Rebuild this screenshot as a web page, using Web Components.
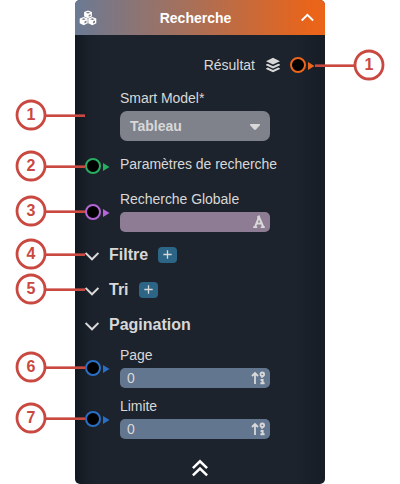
<!DOCTYPE html>
<html lang="fr"><head><meta charset="utf-8"><title>Recherche</title>
<style>
html,body{margin:0;background:#fff}
body{width:400px;height:484px;position:relative;overflow:hidden;font:14px/16px "Liberation Sans",Arial,sans-serif}
</style></head><body>
<node-panel heading="Recherche">
  <output-row label="Résultat"></output-row>
  <node-field label="Smart Model*" style="margin-top:10px"><select-box>Tableau</select-box></node-field>
  <node-field label="Paramètres de recherche" port="#27ae60" style="margin-top:13px;height:20px"></node-field>
  <node-field label="Recherche Globale" port="#b565d8" style="margin-top:17px"><input-box kind="text"></input-box></node-field>
  <section-row label="Filtre" add style="margin-top:5px"></section-row>
  <section-row label="Tri" add></section-row>
  <section-row label="Pagination"></section-row>
  <node-field label="Page" port="#2a6fc4" style="margin-top:5px"><input-box kind="number">0</input-box></node-field>
  <node-field label="Limite" port="#2a6fc4" style="margin-top:10px"><input-box kind="number">0</input-box></node-field>
  <panel-footer></panel-footer>
</node-panel>
<call-out style="left:15px;top:99px">1</call-out>
<call-out style="left:15px;top:150px">2</call-out>
<call-out style="left:15px;top:195px">3</call-out>
<call-out style="left:15px;top:238px">4</call-out>
<call-out style="left:15px;top:273px">5</call-out>
<call-out style="left:15px;top:351px">6</call-out>
<call-out style="left:15px;top:402px">7</call-out>
<call-out reverse style="left:316px;top:49px">1</call-out>
<script>
const define = (name, render) => customElements.define(name, class extends HTMLElement {
  connectedCallback() {
    if (!this.shadowRoot) this.attachShadow({mode: 'open'}).innerHTML = render(this);
  }
});

define('node-panel', el => `<style>
:host{display:block;box-sizing:border-box;width:250px;height:484px;margin-left:75px;border-radius:5px;overflow:hidden;color:#d8d8d8;
background:linear-gradient(90deg,#121820 0,#1a212a 14px,#1c232c 26px,#1c232c 222px,#171c25 100%)}
header{box-sizing:border-box;height:35px;display:grid;grid-template-columns:20px 1fr 20px;align-items:center;padding:0 7px 0 4px;
background:linear-gradient(90deg,#6b7a94 0,#ea6419 95%);color:#fff;font-weight:bold}
b{text-align:center;padding-right:6px}
svg{display:block}
</style><header>
<svg width="18" height="16" viewBox="0 0 18 16"><g fill="#fff"><path d="M9 .4l3.900 1.700v4.500L9 8.300 5.100 6.600V2.100z"/><path d="M4.700 6.900l4 1.700v4.700l-4 2-4-2V8.600z"/><path d="M13.300 6.900l4 1.700v4.700l-4 2-4-2V8.600z"/></g><g fill="#817b86"><path d="M6.700 2.700L9 1.800l2.300.9L9 3.600z"/><path d="M9.700 5l2-.8v1.600l-2 .9z"/><path d="M2.500 9.200l2.200-.9 2.200.9-2.200.9z"/><path d="M5.500 11.500l2-.9v1.900l-2 1z"/><path d="M11.100 9.200l2.200-.9 2.200.9-2.200.9z"/><path d="M14 11.500l2-.9v1.900l-2 1z"/></g></svg>
<b>${el.getAttribute('heading')}</b>
<svg width="16" height="12" viewBox="0 0 16 12"><path d="M3.700 8.500l5.700-5.600 5.700 5.600" fill="none" stroke="#fff" stroke-width="1.900"/></svg>
</header><slot></slot>`);

define('node-port', el => `<style>
:host{display:flex;align-items:center;width:25px;height:16px;gap:2px}
i{box-sizing:border-box;flex:none;width:16px;height:16px;border:2px solid ${el.getAttribute('color')};border-radius:50%;background:#000}
svg{flex:none;margin-top:1px}
</style><i></i><svg width="7" height="8" viewBox="0 0 7 8"><path d="M0 0l6.500 4L0 8z" fill="${el.getAttribute('color')}"/></svg>`);

define('output-row', el => `<style>
:host{display:flex;align-items:center;justify-content:flex-end;height:30px;margin-top:15px;padding-right:10px}
svg{margin:0 9px 0 10px}
</style><span>${el.getAttribute('label')}</span>
<svg width="16" height="16" viewBox="0 0 16 16" fill="#d8d8d8"><path d="M8 .8l7 3.400-7 3.400-7-3.400z"/><path d="M2.700 6.700L8 9.200l5.300-2.500L15 7.600v.6l-7 3.300-7-3.300v-.6z"/><path d="M2.700 10.500L8 13l5.300-2.500 1.700.9v.6l-7 3.300L1 12v-.6z"/></svg>
<node-port color="#ea661c"></node-port>`);

define('node-field', el => {
  const port = el.getAttribute('port');
  return `<style>
:host{display:grid;grid-template-columns:35px 1fr;align-items:center;margin-left:10px}
.body{grid-column:2}
.label{height:16px;line-height:16px;white-space:nowrap;letter-spacing:-.04px}
::slotted(*){margin-top:5px}
node-port{position:relative;top:${el.children.length ? '.5px' : '2px'}}
</style>${port ? `<node-port color="${port}"></node-port>` : ''}
<div class="body"><div class="label">${el.getAttribute('label')}</div><slot></slot></div>`;
});

define('select-box', () => `<style>
:host{box-sizing:border-box;display:flex;align-items:center;justify-content:space-between;width:150px;height:30px;padding:0 10px;border-radius:7px;background:#7f828b;font-weight:bold}
svg{flex:none;margin-top:2px}
</style><slot></slot><svg width="10" height="6" viewBox="0 0 10 6"><path d="M.8 0h8.400q1.200.2.600 1.200L6 5.500q-1 .9-2 0L.2 1.200Q-.4.200.8 0z" fill="#d8d8d8"/></svg>`);

define('input-box', el => {
  const text = el.getAttribute('kind') === 'text';
  return `<style>
:host{box-sizing:border-box;display:flex;align-items:center;justify-content:space-between;width:150px;height:20px;padding:0 ${text ? 4 : 5}px 0 7px;border-radius:5px;background:${text ? '#8d7c93' : '#63768f'}}
svg{fill:none;stroke:#d8d8d8;stroke-width:1.800}
</style><span><slot></slot></span>` + (text
  ? `<svg width="14" height="14" viewBox="0 0 14 14"><path d="M3 12L7 2l4.300 10M4.500 8.500h5.200" stroke-width="2"/><path d="M1.200 12.200h4M8.800 12.200h4M5 2h2.500" stroke-width="1.700"/></svg>`
  : `<svg width="14" height="14" viewBox="0 0 14 14"><path d="M4 13V2M1 5l3-3 3 3"/><circle cx="11.300" cy="3.300" r="1.800"/><path d="M12.900 4L10.500 6.700" stroke-width="1.500"/><path d="M9.600 8.900h2v3.500M9.400 12.300h4.200" stroke-width="2"/></svg>`);
});

define('section-row', el => `<style>
:host{display:flex;align-items:center;height:35px;margin-left:10px;font-size:16px;line-height:18px;font-weight:bold}
.chev{margin:3px 10px 0 0}
.add{display:grid;place-items:center;width:19px;height:16px;margin-left:10px;border-radius:4px;background:#2d6587}
.add svg{display:block}
</style><svg class="chev" width="14" height="9" viewBox="0 0 14 9"><path d="M.6 1L7 7.300 13.400 1" fill="none" stroke="#d8d8d8" stroke-width="1.900"/></svg>
<span>${el.getAttribute('label')}</span>${el.hasAttribute('add') ? `<span class="add"><svg width="9" height="9" viewBox="0 0 9 9"><path d="M4.500 .3v8.400M.3 4.500h8.400" stroke="#d8d8d8" stroke-width="1.300"/></svg></span>` : ''}`);

define('panel-footer', () => `<style>
:host{display:flex;justify-content:center;margin-top:20px}
</style><svg width="18" height="18" viewBox="0 0 18 18"><path d="M1.900 9.100L9 2.300l7.100 6.800M1.900 16.300L9 9.500l7.100 6.800" fill="none" stroke="#fff" stroke-width="2.500"/></svg>`);

define('call-out', el => `<style>
:host{position:absolute;display:flex;align-items:center;flex-direction:${el.hasAttribute('reverse') ? 'row-reverse' : 'row'};color:#c94840}
svg{display:block;grid-area:1/1}
b{display:grid;width:32px;height:32px;place-items:center;font-size:16px;line-height:18px}
span{grid-area:1/1}
i{width:39px;height:3px;margin:0 -1px;background:linear-gradient(#c94840a0 1px,#c94840 1px)}
</style><b><svg width="32" height="32" viewBox="0 0 32 32"><circle cx="16" cy="16" r="14" fill="#fff" stroke="#c94840" stroke-width="2.800"/></svg><span><slot></slot></span></b><i></i>`);
</script></body></html>
